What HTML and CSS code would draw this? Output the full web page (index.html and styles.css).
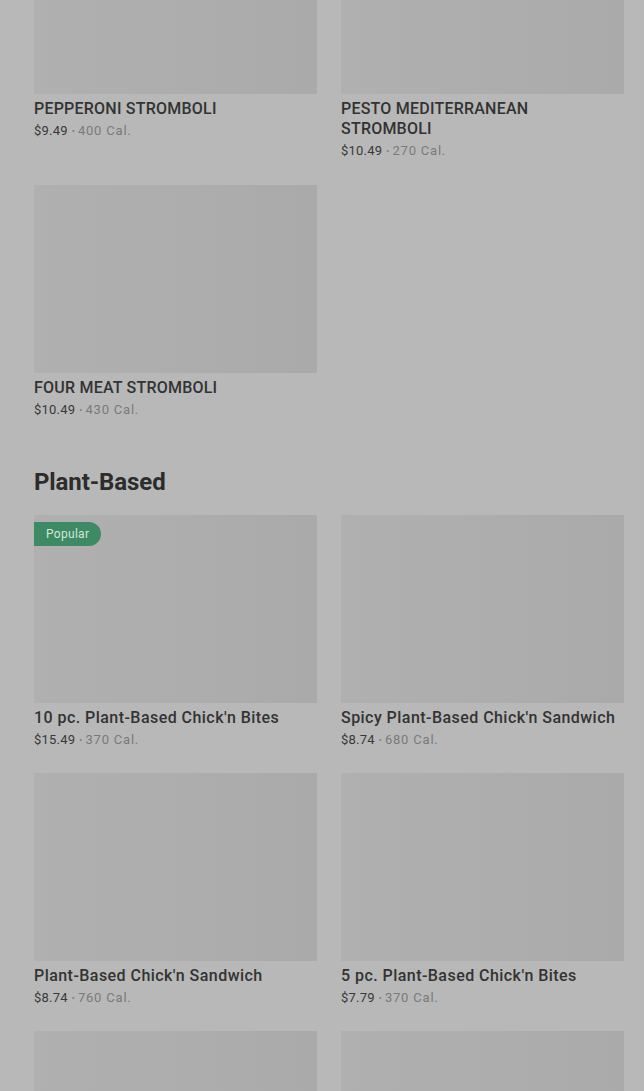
FILE: index.html
```html
<!DOCTYPE html>
<html lang="en">
<head>
<meta charset="utf-8">
<title>Menu</title>
<link rel="stylesheet" href="styles.css">
</head>
<body>
<main class="page">
  <section class="section first">
    <div class="grid">
      <div class="card">
        <div class="thumb"></div>
        <div class="title caps">PEPPERONI STROMBOLI</div>
        <div class="meta"><span class="price">$9.49</span><span class="dot">•</span><span class="cal">400 Cal.</span></div>
      </div>
      <div class="card">
        <div class="thumb"></div>
        <div class="title caps">PESTO MEDITERRANEAN<br>STROMBOLI</div>
        <div class="meta"><span class="price">$10.49</span><span class="dot">•</span><span class="cal">270 Cal.</span></div>
      </div>
      <div class="card">
        <div class="thumb"></div>
        <div class="title caps">FOUR MEAT STROMBOLI</div>
        <div class="meta"><span class="price">$10.49</span><span class="dot">•</span><span class="cal">430 Cal.</span></div>
      </div>
    </div>
  </section>
  <section class="section">
    <h2 class="heading">Plant-Based</h2>
    <div class="grid">
      <div class="card">
        <div class="thumb"><span class="badge">Popular</span></div>
        <div class="title">10 pc. Plant-Based Chick'n Bites</div>
        <div class="meta"><span class="price">$15.49</span><span class="dot">•</span><span class="cal">370 Cal.</span></div>
      </div>
      <div class="card">
        <div class="thumb"></div>
        <div class="title">Spicy Plant-Based Chick'n Sandwich</div>
        <div class="meta"><span class="price">$8.74</span><span class="dot">•</span><span class="cal">680 Cal.</span></div>
      </div>
      <div class="card">
        <div class="thumb"></div>
        <div class="title">Plant-Based Chick'n Sandwich</div>
        <div class="meta"><span class="price">$8.74</span><span class="dot">•</span><span class="cal">760 Cal.</span></div>
      </div>
      <div class="card">
        <div class="thumb"></div>
        <div class="title">5 pc. Plant-Based Chick'n Bites</div>
        <div class="meta"><span class="price">$7.79</span><span class="dot">•</span><span class="cal">370 Cal.</span></div>
      </div>
      <div class="card">
        <div class="thumb"></div>
      </div>
      <div class="card">
        <div class="thumb"></div>
      </div>
    </div>
  </section>
</main>
</body>
</html>
```
FILE: styles.css
```css
html, body {
  margin: 0;
  padding: 0;
  background: #b8b8b8;
  overflow: hidden;
}
body {
  font-family: Roboto, "Liberation Sans", sans-serif;
  color: #2e2e2e;
}
.page {
  padding: 0 20px 0 34px;
  margin-top: -94px;
}
.section.first {
  margin-bottom: 47px;
}
.section.first .grid {
  row-gap: 25px;
}
.heading {
  margin: 0 0 17px 0;
  font-size: 24px;
  line-height: 32px;
  font-weight: 700;
  color: #2c2c2c;
  letter-spacing: -0.1px;
}
.grid {
  display: grid;
  grid-template-columns: 283px 283px;
  column-gap: 24px;
  row-gap: 24px;
  align-items: start;
}
.card {
  display: flex;
  flex-direction: column;
}
.thumb {
  position: relative;
  height: 188px;
  background: linear-gradient(90deg, #b0b0b0 0%, #aeaeae 35%, #aaaaaa 100%);
}
.badge {
  position: absolute;
  left: 0;
  top: 7px;
  height: 24px;
  line-height: 24px;
  padding: 0 12px;
  background: #3d8a64;
  color: #d3e6da;
  font-size: 12px;
  letter-spacing: 0.3px;
  border-radius: 0 12px 12px 0;
}
.title {
  margin-top: 5px;
  font-size: 16px;
  line-height: 20px;
  font-weight: 500;
  letter-spacing: 0.45px;
  color: #333333;
}
.title.caps {
  letter-spacing: 0.22px;
}
.meta {
  margin-top: 2px;
  height: 19px;
  font-size: 13px;
  line-height: 19px;
  letter-spacing: 0.2px;
  white-space: nowrap;
}
.price {
  color: #383838;
}
.dot {
  display: inline-block;
  margin: 0 3px 0 4px;
  color: #7c7c7c;
  font-size: 9px;
  line-height: 1;
  vertical-align: 1px;
}
.cal {
  color: #7a7a7a;
  letter-spacing: 0.8px;
}
```
